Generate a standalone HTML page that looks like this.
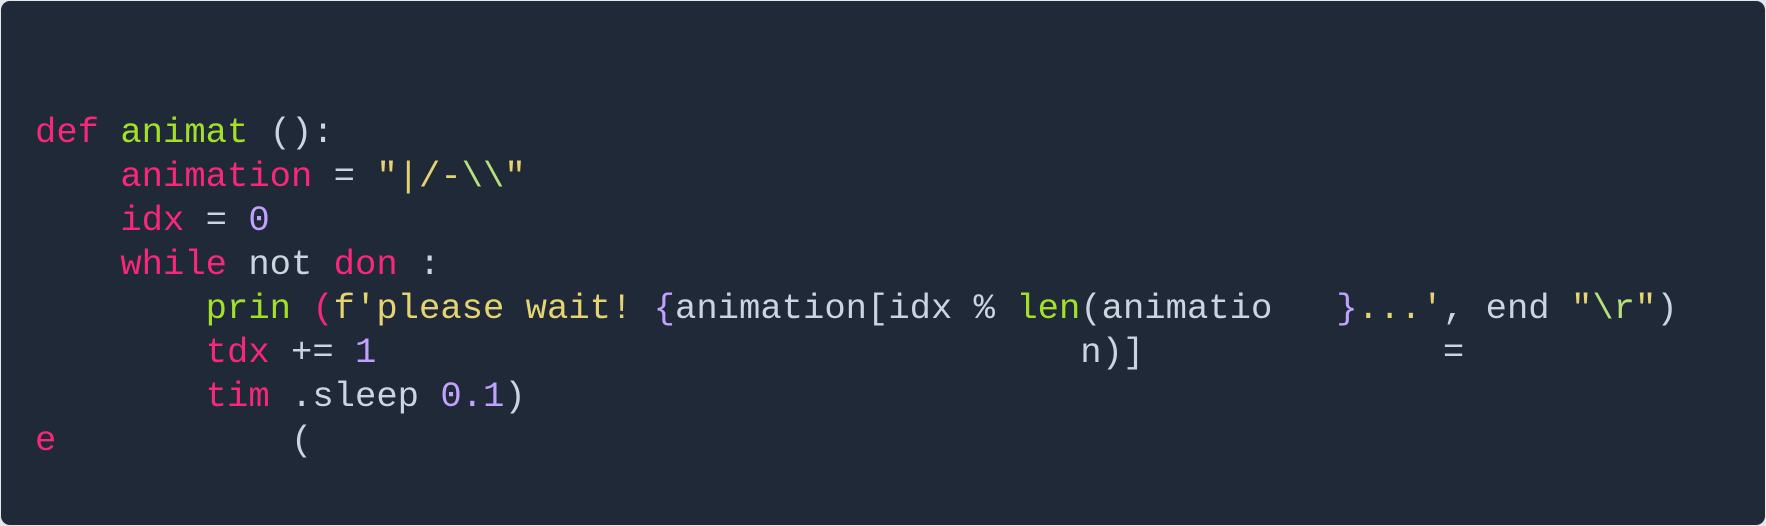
<!DOCTYPE html>
<html><head><meta charset="utf-8"><style>
html,body{margin:0;padding:0;width:1766px;height:526px;background:#e5e7eb;overflow:hidden}
.box{position:absolute;left:1px;top:1px;width:1764px;height:524px;background:#1f2937;border-radius:9px}
pre{position:absolute;left:35px;top:111px;margin:0;font-family:"Liberation Mono","DejaVu Sans Mono",monospace;font-size:35.55px;line-height:44px;color:#cbd5e1;white-space:pre}
.k{color:#f7287a}.g{color:#a3e02a}.y{color:#e6d372}.p{color:#c3a2ff}.s{color:#b5e07a}
</style></head><body><div class="box"></div>
<pre><span class="k">def</span> <span class="g">animat</span> ():
    <span class="k">animation</span> = <span class="y">"|/-</span><span class="s">\\</span><span class="y">"</span>
    <span class="k">idx</span> = <span class="p">0</span>
    <span class="k">while</span> not <span class="k">don</span> :
        <span class="g">prin</span> <span class="k">(</span><span class="y">f'please wait! </span><span class="p">{</span>animation[idx % <span class="g">len</span>(animatio   <span class="p">}</span><span class="y">...'</span>, end <span class="y">"</span><span class="s">\r</span><span class="y">"</span>)
        <span class="k">tdx</span> += <span class="p">1</span>                                 n)]              =
        <span class="k">tim</span> .sleep <span class="p">0.1</span>)
<span class="k">e</span>           (</pre>
</body></html>
